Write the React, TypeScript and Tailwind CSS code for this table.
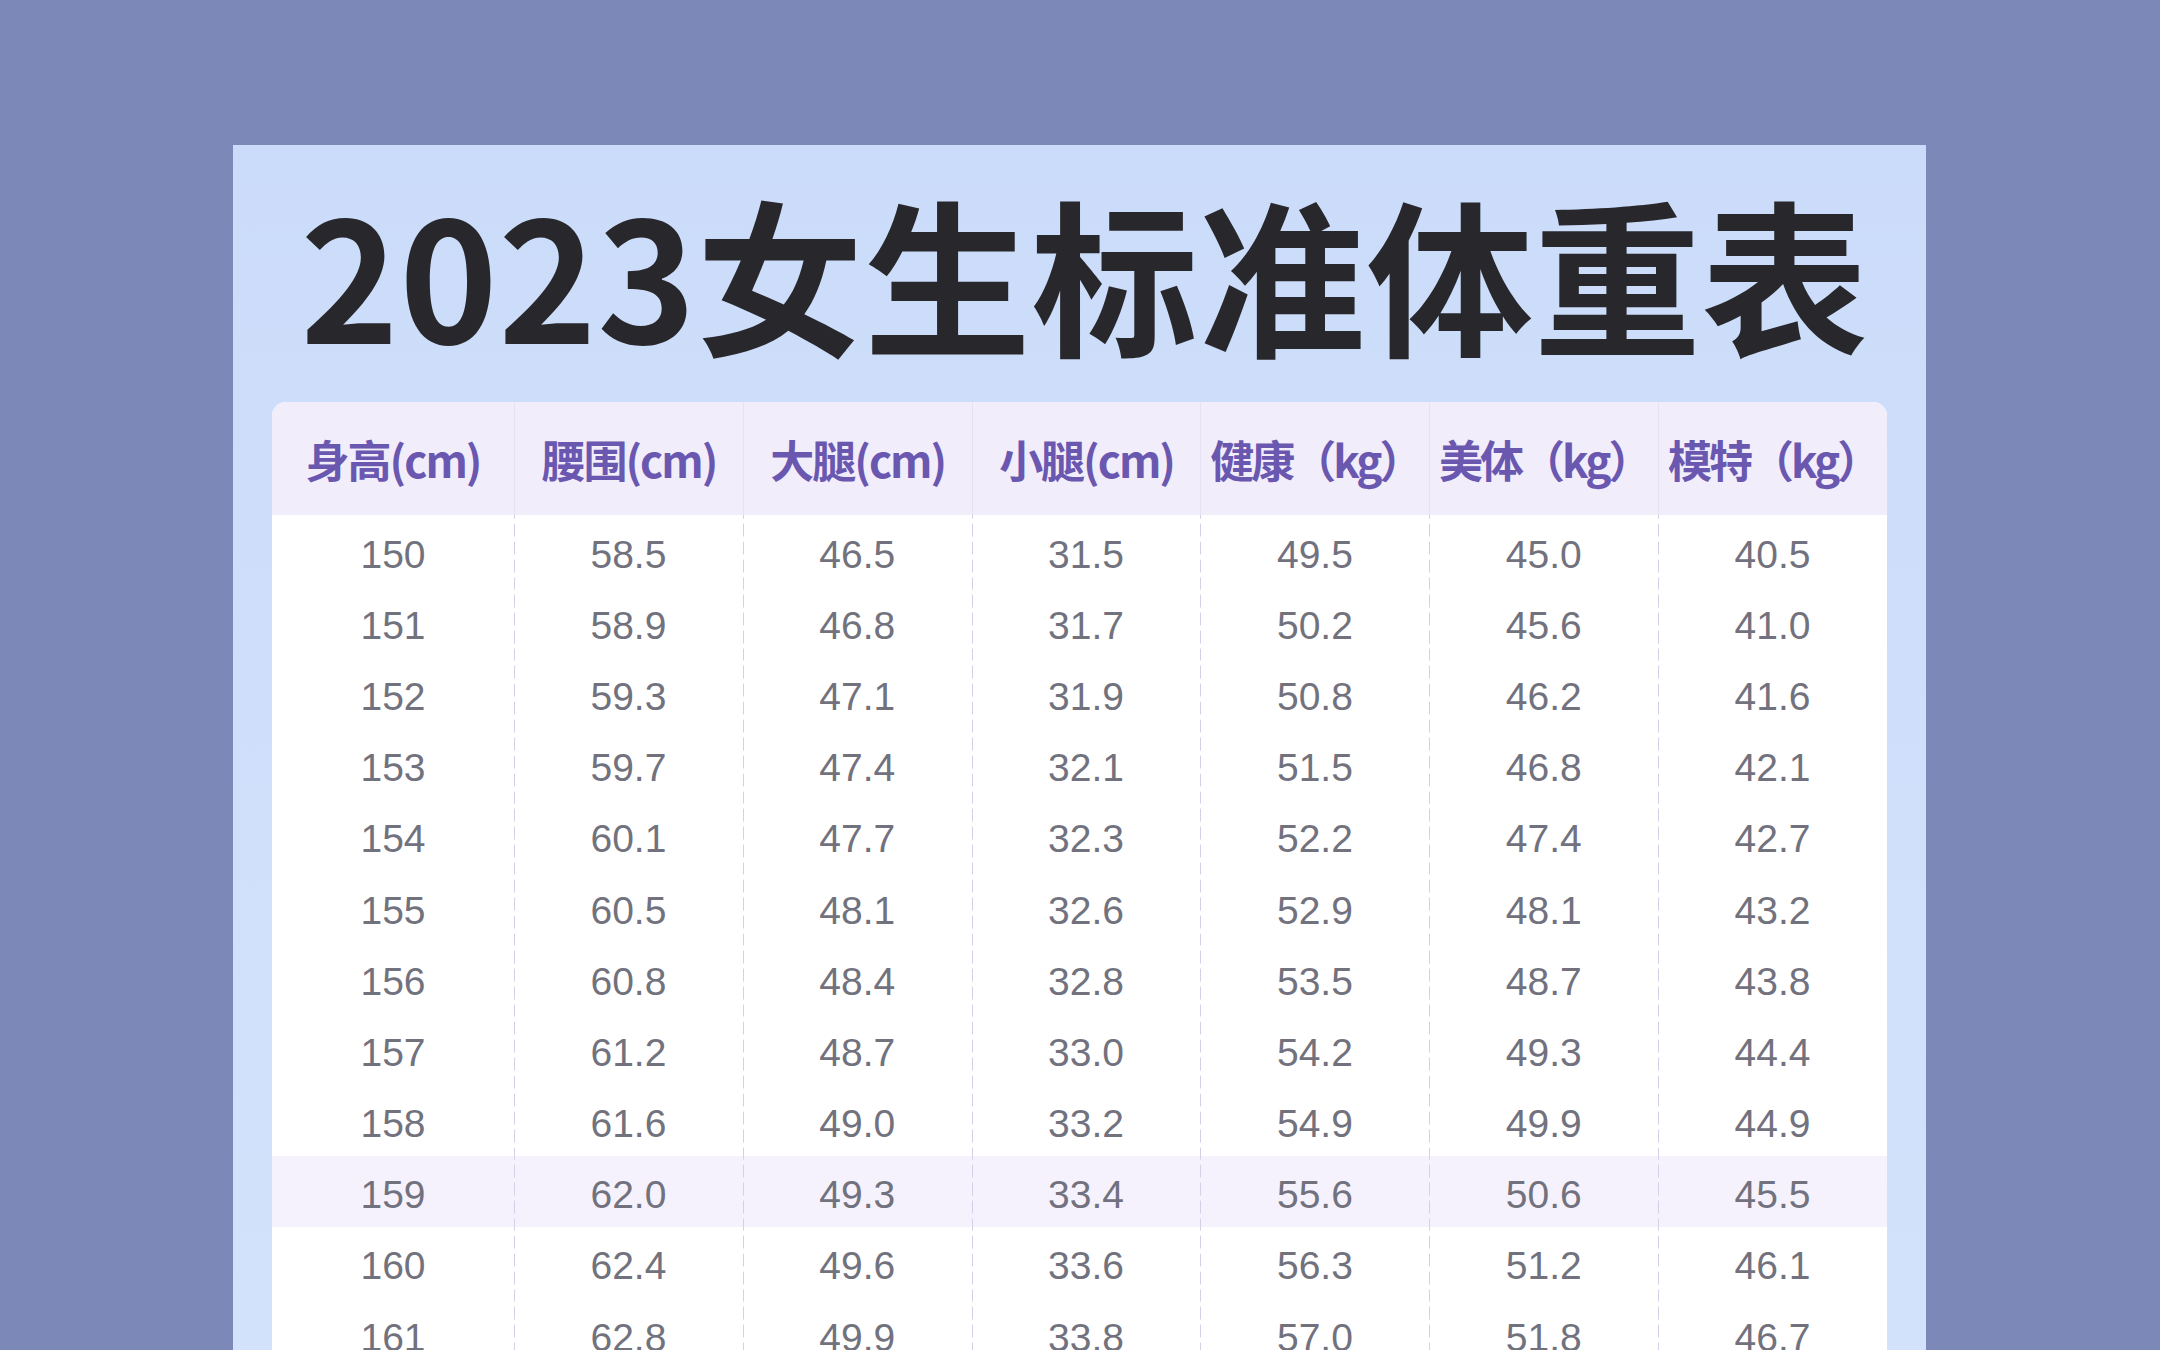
const headers = ["身高(cm)", "腰围(cm)", "大腿(cm)", "小腿(cm)", "健康（kg）", "美体（kg）", "模特（kg）"];

const rows = [
  ["150", "58.5", "46.5", "31.5", "49.5", "45.0", "40.5"],
  ["151", "58.9", "46.8", "31.7", "50.2", "45.6", "41.0"],
  ["152", "59.3", "47.1", "31.9", "50.8", "46.2", "41.6"],
  ["153", "59.7", "47.4", "32.1", "51.5", "46.8", "42.1"],
  ["154", "60.1", "47.7", "32.3", "52.2", "47.4", "42.7"],
  ["155", "60.5", "48.1", "32.6", "52.9", "48.1", "43.2"],
  ["156", "60.8", "48.4", "32.8", "53.5", "48.7", "43.8"],
  ["157", "61.2", "48.7", "33.0", "54.2", "49.3", "44.4"],
  ["158", "61.6", "49.0", "33.2", "54.9", "49.9", "44.9"],
  ["159", "62.0", "49.3", "33.4", "55.6", "50.6", "45.5"],
  ["160", "62.4", "49.6", "33.6", "56.3", "51.2", "46.1"],
  ["161", "62.8", "49.9", "33.8", "57.0", "51.8", "46.7"],
];

const grid = "grid grid-cols-[242px_repeat(6,1fr)]";

const App = () => {
  return (
    <div className="h-[1350px] w-[2160px] overflow-hidden bg-[#7b88b8] pl-[233px] pt-[145px]">
      <div className="w-[1693px] h-[1300px] bg-gradient-to-b from-[#cbdcfa] to-[#d4e3fb] px-[39px]">
        <div className="h-[257px] flex items-center justify-center pl-[10px] pb-[4px]">
          <h1 className="font-['Noto_Sans_CJK_SC',sans-serif] font-bold text-[167px] leading-none text-[#28282c] tracking-[0.5px]">
            2023女生标准体重表
          </h1>
        </div>

        <div className="rounded-t-[14px] overflow-hidden bg-white">
          <div className={`${grid} h-[113px] bg-[#f2edfb]`}>
            {headers.map((h, i) => (
              <div
                key={h}
                className={`flex items-center justify-center ${i > 0 ? "border-l border-[#e7e1f4]" : ""}`}
              >
                <span
                  className={`font-['Noto_Sans_CJK_SC',sans-serif] font-bold text-[44px] leading-none text-[#6a58b0] ${
                    i > 3 ? "tracking-[-3px]" : "tracking-[-2px]"
                  }`}
                >
                  {h}
                </span>
              </div>
            ))}
          </div>

          {rows.map((row, r) => (
            <div key={row[0]} className={`${grid} h-[71.2px] ${r === 9 ? "bg-[#f5f1fd]" : ""}`}>
              {row.map((v, i) => (
                <div
                  key={i}
                  className={`flex items-center justify-center pt-[7px] ${
                    i > 0
                      ? "bg-[linear-gradient(to_bottom,#d5cfe7_75%,transparent_75%)] bg-[length:1px_18px] bg-repeat-y bg-left"
                      : ""
                  }`}
                >
                  <span className="font-['Liberation_Sans',Arial,sans-serif] text-[39px] leading-none text-[#72727e]">
                    {v}
                  </span>
                </div>
              ))}
            </div>
          ))}
        </div>
      </div>
    </div>
  );
};

export default App;
